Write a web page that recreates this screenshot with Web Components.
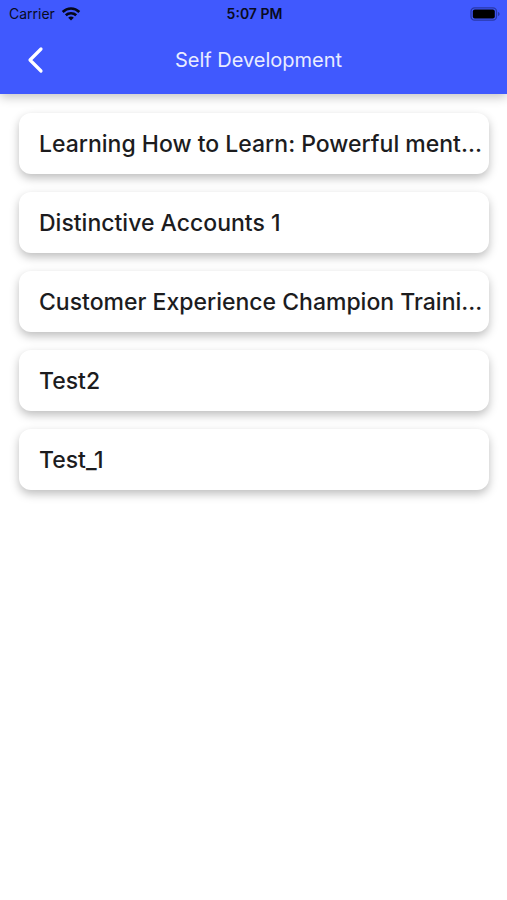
<!DOCTYPE html>
<html lang="en">
<head>
<meta charset="utf-8">
<meta name="viewport" content="width=device-width, initial-scale=1">
<title>Self Development</title>
<style>
  body { margin: 0; background: #fff; color: #1c1c1e; font-family: Inter, "Liberation Sans", sans-serif; }
</style>
</head>
<body>
<course-screen></course-screen>
<script>
  const define = (name, html) => {
    const template = document.createElement('template');
    template.innerHTML = html;
    customElements.define(name, class extends HTMLElement {
      constructor() {
        super();
        this.attachShadow({ mode: 'open' }).append(template.content.cloneNode(true));
      }
    });
  };

  define('status-bar', `
    <style>
      :host { display: grid; grid-template-columns: 1fr auto 1fr; align-items: center; height: 28px; padding: 0 7px 0 9px; color: #080b22; font-size: 14px; line-height: 20px; }
      .carrier { display: flex; align-items: center; gap: 6px; }
      time { font-weight: 600; }
      .battery { justify-self: end; }
      svg { display: block; }
    </style>
    <div class="carrier"><span>Carrier</span>
      <svg width="20" height="14" viewBox="0 0 20 14" fill="none" stroke="#05071a" stroke-width="2.6" aria-label="Wi-Fi" role="img">
        <path d="M1.7 5C6.4.4 13.6.4 18.3 5"/>
        <path d="M4.800 8.300C7.700 5.500 12.300 5.500 15.200 8.300"/>
        <path d="M10 13.500 7.200 10.700C8.800 9.200 11.200 9.200 12.800 10.700Z" fill="#05071a" stroke="none"/>
      </svg>
    </div>
    <time>5:07 PM</time>
    <svg class="battery" width="30" height="14" viewBox="0 0 30 14" aria-label="Battery full" role="img">
      <rect x="1" y=".8" width="25.5" height="12.4" rx="3.6" fill="none" stroke="#2838a8" stroke-width="1.3"/>
      <rect x="2.8" y="2.500" width="22" height="9" rx="2" fill="#000"/>
      <path d="M28 5v4c1-.4 1.6-1.1 1.6-2S29 5.400 28 5Z" fill="#2838a8"/>
    </svg>`);

  define('nav-bar', `
    <style>
      :host { display: grid; grid-template-columns: 1fr auto 1fr; align-items: center; height: 64px; padding: 0 5px 2px 15px; color: #fff; }
      button { display: grid; place-items: center; width: 40px; height: 40px; padding: 0; border: 0; background: none; color: inherit; cursor: pointer; }
      h1 { margin: 0; font-size: 20px; line-height: 28px; font-weight: 400; color: #e9ecff; }
      svg { display: block; }
    </style>
    <button type="button" aria-label="Back">
      <svg width="18" height="28" viewBox="0 0 18 28" fill="none" stroke="currentColor" stroke-width="3.2" stroke-linecap="round" stroke-linejoin="round"><path d="M15 3 4 14l11 11"/></svg>
    </button>
    <h1><slot></slot></h1>`);

  define('app-header', `
    <style>
      :host { display: block; background: #4059fe; box-shadow: 0 3px 10px rgba(0,0,0,.24); }
    </style>
    <header><slot></slot></header>`);

  define('course-card', `
    <style>
      :host { display: block; border-radius: 12px; background: #fff; box-shadow: 0 4px 10px rgba(0,0,0,.26); }
      a { display: block; overflow: hidden; padding: 15px 4px 14px 20px; color: inherit; font-size: 23px; line-height: 32px; font-weight: 500; text-decoration: none; white-space: nowrap; text-overflow: ellipsis; }
    </style>
    <a href="#course"><slot></slot></a>`);

  define('course-list', `
    <style>
      :host { display: flex; flex-direction: column; gap: 18px; padding: 19px 18px 19px 19px; }
    </style>
    <slot></slot>`);

  define('course-screen', `
    <style>:host { display: block; }</style>
    <app-header>
      <status-bar></status-bar>
      <nav-bar>Self Development</nav-bar>
    </app-header>
    <main>
      <course-list role="list">
        <course-card role="listitem">Learning How to Learn: Powerful ment...</course-card>
        <course-card role="listitem">Distinctive Accounts 1</course-card>
        <course-card role="listitem">Customer Experience Champion Traini...</course-card>
        <course-card role="listitem">Test2</course-card>
        <course-card role="listitem">Test_1</course-card>
      </course-list>
    </main>`);
</script>
</body>
</html>
